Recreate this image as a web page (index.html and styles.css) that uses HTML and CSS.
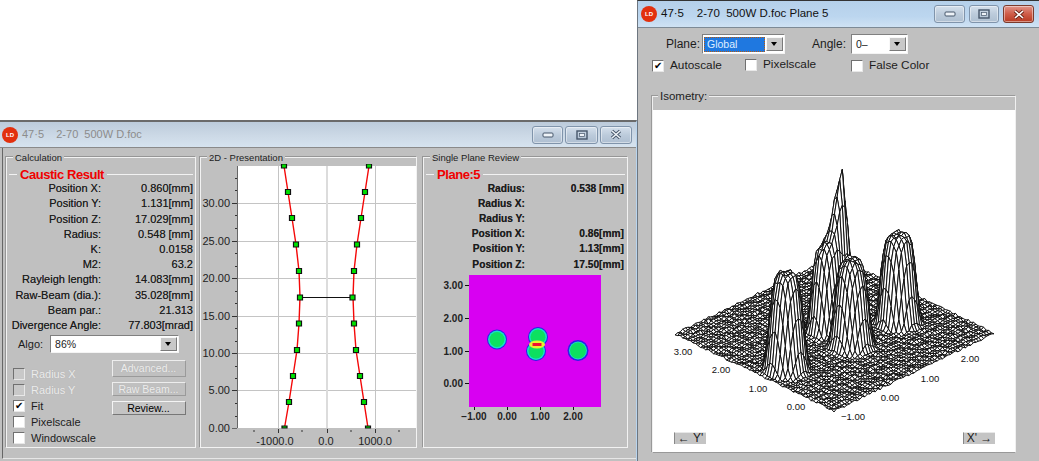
FILE: index.html
```html
<!DOCTYPE html>
<html lang="en">
<head>
<meta charset="utf-8">
<title>Caustic</title>
<link rel="stylesheet" href="styles.css">
</head>
<body>
<div class="desktop">

<section class="window win-main">
  <header class="titlebar inactive">
    <span class="logo">LD</span>
    <span class="wintitle">47·5&nbsp;&nbsp;&nbsp; 2-70&nbsp; 500W D.foc</span>
    <div class="caption">
      <span class="capbtn min"><svg width="12" height="8" viewBox="0 0 12 8"><rect x="1" y="2" width="10" height="4" rx="1" fill="#eef3f8" stroke="#46566a"/></svg></span>
      <span class="capbtn max"><svg width="12" height="10" viewBox="0 0 12 10"><rect x="1" y="1" width="10" height="8" fill="none" stroke="#46566a" stroke-width="1.400"/><rect x="3.500" y="3.500" width="5" height="3" fill="#eef3f8" stroke="#46566a" stroke-width=".7"/></svg></span>
      <span class="capbtn close"><svg width="14" height="11" viewBox="0 0 14 11"><path d="M3 2l8 7M11 2l-8 7" stroke="#46566a" stroke-width="3.400"/><path d="M3 2l8 7M11 2l-8 7" stroke="#eef3f8" stroke-width="1.600"/></svg></span>
    </div>
  </header>
  <div class="panels">

    <div class="group g-calc">
      <span class="legend">Calculation</span>
      <div class="headline"><span class="dash"></span><span class="red">Caustic Result</span><span class="rule"></span></div>
      <div class="rows rows-calc">
        <span>Position X:</span><span>0.860[mm]</span>
        <span>Position Y:</span><span>1.131[mm]</span>
        <span>Position Z:</span><span>17.029[mm]</span>
        <span>Radius:</span><span>0.548 [mm]</span>
        <span>K:</span><span>0.0158</span>
        <span>M2:</span><span>63.2</span>
        <span>Rayleigh length:</span><span>14.083[mm]</span>
        <span>Raw-Beam (dia.):</span><span>35.028[mm]</span>
        <span>Beam par.:</span><span>21.313</span>
        <span>Divergence Angle:</span><span>77.803[mrad]</span>
      </div>
      <div class="algo">
        <span>Algo:</span>
        <div class="combo combo-algo"><span class="combo-text">86%</span><span class="arrow"></span></div>
      </div>
      <div class="lower">
        <div class="checks">
          <label class="check disabled"><span class="box"></span>Radius X</label>
          <label class="check disabled"><span class="box"></span>Radius Y</label>
          <label class="check"><span class="box on">✔</span>Fit</label>
          <label class="check"><span class="box"></span>Pixelscale</label>
          <label class="check"><span class="box"></span>Windowscale</label>
        </div>
        <div class="buttons">
          <span class="btn btn-adv off">Advanced...</span>
          <span class="btn btn-raw off">Raw Beam...</span>
          <span class="btn btn-rev">Review...</span>
        </div>
      </div>
    </div>

    <div class="group g-plot">
      <span class="legend">2D - Presentation</span>
      <svg class="plot" width="215" height="283" viewBox="201 164 215 283">
        <rect x="237" y="166" width="179" height="262" fill="#fff"/>
        <g stroke="#c4c4c4" stroke-width="1">
          <path d="M278.500 166V428M375.500 166V428M237 203.500H416M237 241.500H416M237 278.500H416M237 316.500H416M237 353.500H416M237 390.500H416"/>
          <path d="M327 166V428" stroke="#dcdcdc" stroke-width="2"/>
        </g>
        <path d="M237.500 166V428M232 428.500H237" stroke="#666"/>
        <path d="M232 203.500h5M232 241.500h5M232 278.500h5M232 316.500h5M232 353.500h5M232 390.500h5" stroke="#333"/>
        <path d="M235 178.500h2M235 190.500h2M235 215.500h2M235 228.500h2M235 253.500h2M235 266.500h2M235 291.500h2M235 303.500h2M235 328.500h2M235 341.500h2M235 366.500h2M235 378.500h2M235 403.500h2M235 416.500h2" stroke="#333"/>
        <path d="M278.500 429v4M327.500 429v4M375.500 429v4M254 430v2M302 430v2M351 430v2M399 430v2" stroke="#333"/>
        <g class="axis">
          <text x="230" y="207" text-anchor="end">30.00</text>
          <text x="230" y="245" text-anchor="end">25.00</text>
          <text x="230" y="282" text-anchor="end">20.00</text>
          <text x="230" y="320" text-anchor="end">15.00</text>
          <text x="230" y="357" text-anchor="end">10.00</text>
          <text x="230" y="394" text-anchor="end">5.00</text>
          <text x="230" y="432" text-anchor="end">0.00</text>
          <text x="275" y="445" text-anchor="middle">-1000.0</text>
          <text x="326" y="445" text-anchor="middle">0.0</text>
          <text x="375" y="445" text-anchor="middle">1000.0</text>
        </g>
        <path d="M300 297.500H352.500" stroke="#111" stroke-width="1.200"/>
        <path d="M284 166L288 192L292 218L296 244.500L299 271L300 297L299 323.500L297 350L293 376L289 402L284.500 428" fill="none" stroke="#f40808" stroke-width="1.400"/>
        <path d="M369 166L365 192L361 218L357 244.500L354 271L353 297L354 323.500L356 350L360 376L364 402L368 428" fill="none" stroke="#f40808" stroke-width="1.400"/>
        <g fill="#00e000" stroke="#111" stroke-width="1.200">
          <path d="M281.500 164h5v4h-5zM285.500 189.500h5v5h-5zM289.500 215.500h5v5h-5zM293.500 242h5v5h-5zM296.500 268.500h5v5h-5zM297.500 295h5v5h-5zM296.500 321h5v5h-5zM294.500 347.500h5v5h-5zM290.500 373.500h5v5h-5zM286.500 399.500h5v5h-5zM282 426h5v2h-5z"/>
          <path d="M366.500 164h5v4h-5zM362.500 189.500h5v5h-5zM358.500 215.500h5v5h-5zM354.500 242h5v5h-5zM351.500 268.500h5v5h-5zM350 295h5v5h-5zM351.500 321h5v5h-5zM353.500 347.500h5v5h-5zM357.500 373.500h5v5h-5zM361.500 399.500h5v5h-5zM365.500 426h5v2h-5z"/>
        </g>
      </svg>
    </div>

    <div class="group g-plane">
      <span class="legend">Single Plane Review</span>
      <div class="headline"><span class="dash"></span><span class="red">Plane:5</span><span class="rule"></span></div>
      <div class="rows rows-plane">
        <span>Radius:</span><span>0.538 [mm]</span>
        <span>Radius X:</span><span></span>
        <span>Radius Y:</span><span></span>
        <span>Position X:</span><span>0.86[mm]</span>
        <span>Position Y:</span><span>1.13[mm]</span>
        <span>Position Z:</span><span>17.50[mm]</span>
      </div>
      <svg class="map" width="200" height="150" viewBox="424 273 200 150">
        <defs>
          <filter id="soft" x="-10%" y="-10%" width="120%" height="120%"><feGaussianBlur stdDeviation=".6"/></filter>
        </defs>
        <rect x="469" y="275" width="132" height="132" fill="#d800f2"/>
        <g filter="url(#soft)">
          <circle cx="497" cy="339.500" r="10" fill="#2a20e8"/>
          <circle cx="497" cy="339.500" r="9" fill="#14e0c8"/>
          <circle cx="497" cy="339.500" r="7.500" fill="#10e060"/>
          <circle cx="538" cy="337" r="10" fill="#2a20e8"/>
          <circle cx="536" cy="351" r="10" fill="#2a20e8"/>
          <circle cx="538" cy="337" r="9" fill="#14e0c8"/>
          <circle cx="536" cy="351" r="9" fill="#14e0c8"/>
          <circle cx="538" cy="337" r="7.500" fill="#10e060"/>
          <circle cx="536" cy="351" r="7.500" fill="#10e060"/>
          <circle cx="578" cy="350.500" r="10.500" fill="#2a20e8"/>
          <circle cx="578" cy="350.500" r="9" fill="#14e0c8"/>
          <circle cx="578" cy="350.500" r="8" fill="#10e060"/>
          <ellipse cx="537" cy="344.500" rx="8" ry="4" fill="#e8f030"/>
          <rect x="532.500" y="343" width="9" height="3" fill="#f01030"/>
        </g>
        <path d="M469 285.500h-4M469 318.500h-4M469 351.500h-4M469 383.500h-4M474.500 407v3M507.500 407v3M540.500 407v3M573.500 407v3" stroke="#111"/>
        <g class="axis">
          <text x="463" y="289" text-anchor="end">3.00</text>
          <text x="463" y="322" text-anchor="end">2.00</text>
          <text x="463" y="355" text-anchor="end">1.00</text>
          <text x="463" y="387" text-anchor="end">0.00</text>
          <text x="474" y="420" text-anchor="middle">−1.00</text>
          <text x="507" y="420" text-anchor="middle">0.00</text>
          <text x="540" y="420" text-anchor="middle">1.00</text>
          <text x="573" y="420" text-anchor="middle">2.00</text>
        </g>
      </svg>
    </div>

  </div>
</section>

<section class="window win-plane">
  <header class="titlebar active">
    <span class="logo">LD</span>
    <span class="wintitle">47·5&nbsp;&nbsp;&nbsp; 2-70&nbsp; 500W D.foc Plane 5</span>
    <div class="caption">
      <span class="capbtn min"><svg width="12" height="8" viewBox="0 0 12 8"><rect x="1" y="2" width="10" height="4" rx="1" fill="#eef3f8" stroke="#46566a"/></svg></span>
      <span class="capbtn max"><svg width="12" height="10" viewBox="0 0 12 10"><rect x="1" y="1" width="10" height="8" fill="none" stroke="#46566a" stroke-width="1.400"/><rect x="3.500" y="3.500" width="5" height="3" fill="#eef3f8" stroke="#46566a" stroke-width=".7"/></svg></span>
      <span class="capbtn close hot"><svg width="14" height="11" viewBox="0 0 14 11"><path d="M3 2l8 7M11 2l-8 7" stroke="#6a2418" stroke-width="3.400"/><path d="M3 2l8 7M11 2l-8 7" stroke="#fff" stroke-width="1.600"/></svg></span>
    </div>
  </header>
  <div class="plane-body">
    <div class="toolbar">
      <span class="t-plane">Plane:</span>
      <div class="combo combo-plane"><span class="combo-text selected">Global</span><span class="arrow"></span></div>
      <span class="t-angle">Angle:</span>
      <div class="combo combo-angle"><span class="combo-text">0–</span><span class="arrow"></span></div>
    </div>
    <div class="optrow">
      <label class="check c-auto"><span class="box on">✔</span>Autoscale</label>
      <label class="check c-pix"><span class="box"></span>Pixelscale</label>
      <label class="check c-false"><span class="box"></span>False Color</label>
    </div>
    <div class="group g-iso">
      <span class="legend">Isometry:</span>
      <div class="iso-white">
        <svg id="iso" width="363" height="318" viewBox="652 110 363 318">
          <g id="mesh"></g>
          <g class="axis iso-axis">
            <text x="682" y="355" text-anchor="middle">3.00</text>
            <text x="720" y="373" text-anchor="middle">2.00</text>
            <text x="757" y="392" text-anchor="middle">1.00</text>
            <text x="795" y="410" text-anchor="middle">0.00</text>
            <text x="852" y="420" text-anchor="middle">−1.00</text>
            <text x="889" y="401" text-anchor="middle">0.00</text>
            <text x="929" y="382" text-anchor="middle">1.00</text>
            <text x="969" y="362" text-anchor="middle">2.00</text>
          </g>
        </svg>
        <div class="iso-btns">
          <span class="axis-btn">← Y'</span>
          <span class="axis-btn">X' →</span>
        </div>
      </div>
    </div>
  </div>
</section>

</div>
<script src="script.js"></script>
</body>
</html>
```
FILE: styles.css
```css
* { box-sizing: border-box; }
html, body { margin: 0; padding: 0; background: #fff; }
body { font: 11px/1 "Liberation Sans", Arial, sans-serif; color: #1c1c1c; overflow: hidden; }
.desktop { position: relative; width: 1039px; height: 461px; overflow: hidden; }

.window { position: absolute; background: #c0c0c0; display: flex; flex-direction: column; }
.win-main { left: 0; top: 120px; width: 637px; height: 341px; border-top: 2px solid #6a6a6a; border-right: 1px solid #b8d4ee; }
.win-plane { left: 637px; top: 0; width: 402px; height: 461px; border-top: 1px solid #333; border-left: 1px solid #6d7680; }

.titlebar { display: flex; align-items: center; flex: none; background: linear-gradient(180deg, #bccbdb 0%, #ccd9e6 55%, #d6e3ef 100%); }
.titlebar.inactive { height: 26px; padding-left: 2px; border-bottom: 1px solid #8a8a8a; }
.titlebar.active { height: 27px; padding-left: 3px; background: linear-gradient(180deg, #b5d0ea 0%, #bcd6ef 60%, #cfe2f4 100%); border-bottom: 1px solid #7d8a96; }
.logo { width: 16px; height: 16px; border-radius: 50%; background: #e2300e; color: #fff; font-size: 6px; font-weight: 700; display: flex; align-items: center; justify-content: center; flex: none; }
.wintitle { margin-left: 4px; white-space: nowrap; }
.inactive .wintitle { color: #8c8c8c; font-size: 11px; }
.active .wintitle { color: #111; font-size: 11.5px; }
.caption { margin-left: auto; display: flex; gap: 2px; padding-right: 4px; }
.active .caption { gap: 4px; padding-right: 5px; }
.capbtn { height: 18px; width: 31px; border: 1px solid #8094ab; border-radius: 3px; display: flex; align-items: center; justify-content: center; background: linear-gradient(180deg, #d5e0ec 0%, #bccbdb 50%, #aebfd1 100%); box-shadow: inset 0 0 0 1px rgba(255,255,255,.45); }
.capbtn.max { width: 33px; }
.capbtn.close { width: 32px; }
.active .capbtn.max { width: 30px; }
.active .capbtn.close { width: 31px; }
.capbtn.hot { border-color: #7a3a2c; background: linear-gradient(180deg, #e0958a 0%, #cf5c48 50%, #b83a22 100%); }

.panels { display: flex; align-items: flex-start; height: 311px; margin-left: 2px; padding: 9px 0 0 3px; border-left: 1px solid #666; border-bottom: 1px solid #e6e6e6; }
.group { border: 1px solid #f2f2f2; box-shadow: -1px -1px 0 #969696; display: flex; flex-direction: column; }
.legend { display: block; width: fit-content; margin: -7px 0 0 6px; padding: 0 2px; background: #c0c0c0; line-height: 13px; font-size: 9.5px; color: #222; white-space: nowrap; }
.g-calc { width: 190px; height: 291px; margin-right: 4px; }
.g-plot { width: 217px; height: 291px; margin-right: 6px; }
.g-plane { width: 205px; height: 291px; }

.headline { display: flex; align-items: center; height: 15px; margin-top: 3px; padding: 0 2px; gap: 3px; }
.dash { width: 8px; height: 1px; background: #f2f2f2; flex: none; }
.rule { flex: 1; height: 1px; background: #f2f2f2; }
.red { color: #f00000; font-weight: 700; font-size: 13px; letter-spacing: -.45px; white-space: nowrap; }

.rows { display: grid; grid-auto-rows: 15.22px; align-items: center; text-align: right; white-space: nowrap; margin-top: -1px; text-shadow: 0 0 .6px rgba(0,0,0,.6); }
.rows-calc { grid-template-columns: 94px 92px; }
.rows-plane { grid-template-columns: 101px 99px; font-weight: 700; font-size: 10.2px; }

.algo { display: flex; align-items: center; margin: 2px 0 0 11px; height: 18px; gap: 7px; }
.combo { display: flex; align-items: center; background: #fff; border: 1px solid #f4f4f4; border-top-color: #808080; border-left-color: #808080; padding: 1px; }
.combo-algo { width: 129px; height: 18px; }
.combo-text { flex: 1; padding-left: 3px; font-size: 10.5px; }
.arrow { width: 17px; height: 14px; flex: none; background: #c8c8c8; border: 1px solid; border-color: #f8f8f8 #7a7a7a #7a7a7a #f8f8f8; position: relative; }
.arrow::after { content: ""; position: absolute; left: 4px; top: 4px; border: 3.5px solid transparent; border-top: 4px solid #000; border-bottom: 0; }

.lower { display: flex; margin: 7px 0 0 6px; }
.checks { display: flex; flex-direction: column; gap: 4px; width: 98px; padding-top: 8px; }
.check { display: flex; align-items: center; gap: 6px; height: 12px; white-space: nowrap; }
.box { width: 12px; height: 12px; flex: none; background: #fff; border: 1px solid; border-color: #707070 #e8e8e8 #e8e8e8 #707070; display: flex; align-items: center; justify-content: center; font-size: 10px; color: #000; }
.disabled .box { background: #c8c8c8; }
.disabled { color: #ececec; text-shadow: 0 0 1px #a8a8a8; }
.buttons { display: flex; flex-direction: column; align-items: center; width: 75px; }
.btn { width: 74px; background: #c4c4c4; border: 1px solid; border-color: #f4f4f4 #777 #777 #f4f4f4; display: flex; align-items: center; justify-content: center; font-size: 10.5px; }
.btn.off { color: #ededed; background: #c0c0c0; border-color: #ededed #9a9a9a #9a9a9a #ededed; text-shadow: 0 0 1px #a8a8a8; }
.btn-adv { height: 17px; }
.btn-raw { height: 14px; margin-top: 5px; }
.btn-rev { height: 14px; margin-top: 5px; color: #000; }

.plot, .map, #iso { display: block; }
.axis text { font: 11px "Liberation Sans", Arial, sans-serif; fill: #222; }
.map .axis text { font-weight: 700; font-size: 10px; }
.iso-axis text { font-size: 9.5px; fill: #111; }
.map { margin-top: 1px; }

.plane-body { flex: 1; display: flex; flex-direction: column; padding: 6px 23px 0 14px; font-size: 12px; }
.toolbar { display: flex; align-items: center; height: 20px; }
.t-plane { margin-left: 14px; width: 36px; }
.t-angle { margin-left: 27px; width: 39px; }
.combo-plane { width: 83px; height: 20px; }
.combo-angle { width: 57px; height: 20px; }
.selected { background: #1f78e0; color: #dfeeff; outline: 1px dotted #b45a10; outline-offset: -1px; height: 15px; line-height: 15px; margin-right: 1px; }
.optrow { display: flex; align-items: center; margin-top: 5px; height: 14px; }
.c-auto { width: 93px; }
.c-pix { width: 106px; margin-top: -2px; }
.c-false { width: 90px; }
.optrow .check { font-size: 11.8px; }
.g-iso { margin-top: 23px; height: 357px; width: 364px; border-color: #f0f0f0 #f0f0f0 #999 #f0f0f0; box-shadow: -1px -1px 0 #999; }
.g-iso .legend { font-size: 11.5px; margin-left: 5px; }
.iso-white { margin-top: 7px; flex: 1; background: #fff; display: flex; flex-direction: column; }
.iso-btns { display: flex; justify-content: space-between; padding: 4px 20px 0 21px; }
.axis-btn { width: 32px; height: 12px; background: #c4c4c4; border-left: 1px solid #888; border-top: 1px solid #e8e8e8; font-size: 12px; line-height: 11px; text-align: center; white-space: nowrap; overflow: hidden; }
```
FILE: script.js
```js
(function () {
  var NS = 'http://www.w3.org/2000/svg';
  var mesh = document.getElementById('mesh');
  var n = 62;
  var F = [833, 411], R = [993, 333], L = [674, 334];
  var peaks = [
    { u: .127, v: .427, h: 96, r: .082, p: 5 },
    { u: .478, v: .372, h: 86, r: .082, p: 5 },
    { u: .583, v: .532, h: 146, r: .040, p: 1.6 },
    { u: .497, v: .547, h: 84, r: .072, p: 5 },
    { u: .775, v: .375, h: 87, r: .085, p: 6 }
  ];
  var seed = 12345;
  function rnd() { seed = (seed * 16807) % 2147483647; return seed / 2147483647; }
  var H = [];
  for (var i = 0; i <= n; i++) {
    H[i] = [];
    for (var j = 0; j <= n; j++) {
      var u = i / n, v = j / n, z = (rnd() - .5) * 2.4;
      peaks.forEach(function (k) {
        var d = Math.hypot(u - k.u, v - k.v);
        z += k.h * Math.exp(-Math.pow(d / k.r, k.p)) * (1 + (rnd() - .5) * .05);
      });
      H[i][j] = z;
    }
  }
  function pt(i, j) {
    var u = i / n, v = j / n;
    return (F[0] + u * (R[0] - F[0]) + v * (L[0] - F[0])).toFixed(1) + ',' +
      (F[1] + u * (R[1] - F[1]) + v * (L[1] - F[1]) - H[i][j]).toFixed(1);
  }
  var frag = document.createDocumentFragment();
  for (var a = n - 1; a >= 0; a--) {
    for (var b = n - 1; b >= 0; b--) {
      var p = document.createElementNS(NS, 'polygon');
      p.setAttribute('points', pt(a, b) + ' ' + pt(a + 1, b) + ' ' + pt(a + 1, b + 1) + ' ' + pt(a, b + 1));
      p.setAttribute('fill', '#fff');
      p.setAttribute('stroke', '#111');
      p.setAttribute('stroke-width', '1');
      frag.appendChild(p);
    }
  }
  mesh.appendChild(frag);
})();
```
